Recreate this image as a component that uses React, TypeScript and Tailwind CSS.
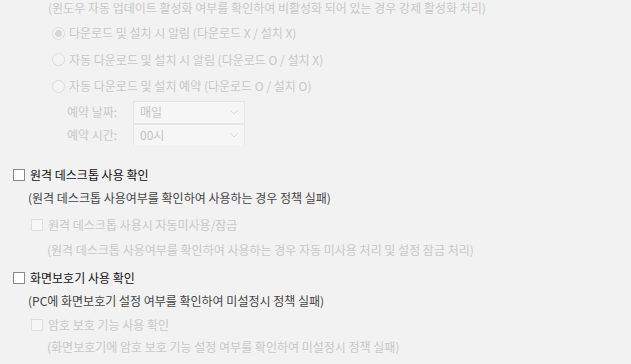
const font = { fontFamily: '"Noto Sans CJK KR", "Noto Sans", sans-serif' };

function Radio({ checked, label }: { checked?: boolean; label: string }) {
  return (
    <div className="flex h-[26.5px] items-center pl-[52px]">
      <span className="flex h-[13px] w-[13px] items-center justify-center rounded-full border border-[#dcdcdc] bg-[#f4f4f4]">
        {checked && <span className="h-[7px] w-[7px] rounded-full bg-[#d6d6d6]" />}
      </span>
      <span className="ml-[4px] text-[#c8c8c8]">{label}</span>
    </div>
  );
}

function SelectRow({ label, value }: { label: string; value: string }) {
  return (
    <div className="flex h-[23px] items-center">
      <span className="box-content w-[66px] pl-[67px] text-[#c8c8c8]">{label}</span>
      <div className="flex h-[23px] w-[112px] items-center justify-between border border-[#e6e6e6] bg-[#f6f6f6] pl-[6px] pr-[5px] text-[#c4c4c4]">
        <span>{value}</span>
        <svg width="10" height="6" viewBox="0 0 10 6" fill="none">
          <path d="M1 1l4 4 4-4" stroke="#dadada" strokeWidth="1" />
        </svg>
      </div>
    </div>
  );
}

function Check({
  label,
  disabled,
  indent,
}: {
  label: string;
  disabled?: boolean;
  indent: string;
}) {
  return (
    <div className={`flex h-[24px] items-center ${indent}`}>
      <span
        className={`h-[12px] w-[12px] shrink-0 border ${
          disabled ? "border-[#dedede] bg-[#f7f7f7]" : "border-[#8a8a8a] bg-white"
        }`}
      />
      <span className={`ml-[5px] ${disabled ? "text-[#c8c8c8]" : "text-[#111]"}`}>{label}</span>
    </div>
  );
}

export default function App() {
  return (
    <div className="h-[364px] w-[631px] overflow-hidden bg-[#f2f2f2] text-[12px] leading-none" style={font}>
      <div className="h-[145px] overflow-hidden">
        <div className="flex h-[20px] items-center pb-[4px] pl-[48px] text-[#c8c8c8]">
          (윈도우 자동 업데이트 활성화 여부를 확인하여 비활성화 되어 있는 경우 강제 활성화 처리)
        </div>
        <Radio checked label="다운로드 및 설치 시 알림 (다운로드 X / 설치 X)" />
        <Radio label="자동 다운로드 및 설치 시 알림 (다운로드 O / 설치 X)" />
        <Radio label="자동 다운로드 및 설치 예약 (다운로드 O / 설치 O)" />
        <div className="mt-[1px] flex flex-col">
          <SelectRow label="예약 날짜:" value="매일" />
          <SelectRow label="예약 시간:" value="00시" />
        </div>
      </div>

      <div className="pt-[18px]">
        <Check indent="pl-[13px]" label="원격 데스크톱 사용 확인" />
        <div className="flex h-[22px] items-center pl-[28px] text-[#444]">
          (원격 데스크톱 사용여부를 확인하여 사용하는 경우 정책 실패)
        </div>
        <div className="mt-[4px]">
          <Check indent="pl-[31px]" disabled label="원격 데스크톱 사용시 자동미사용/잠금" />
        </div>
        <div className="flex h-[26px] items-center pl-[47px] text-[#c8c8c8]">
          (원격 데스크톱 사용여부를 확인하여 사용하는 경우 자동 미사용 처리 및 설정 잠금 처리)
        </div>
        <div className="mt-[3px]">
          <Check indent="pl-[13px]" label="화면보호기 사용 확인" />
        </div>
        <div className="flex h-[22px] items-center pl-[28px] text-[#444]">
          (PC에 화면보호기 설정 여부를 확인하여 미설정시 정책 실패)
        </div>
        <div className="mt-[1px]">
          <Check indent="pl-[31px]" disabled label="암호 보호 기능 사용 확인" />
        </div>
        <div className="flex h-[20px] items-center pl-[47px] text-[#c8c8c8]">
          (화면보호기에 암호 보호 기능 설정 여부를 확인하여 미설정시 정책 실패)
        </div>
      </div>
    </div>
  );
}
